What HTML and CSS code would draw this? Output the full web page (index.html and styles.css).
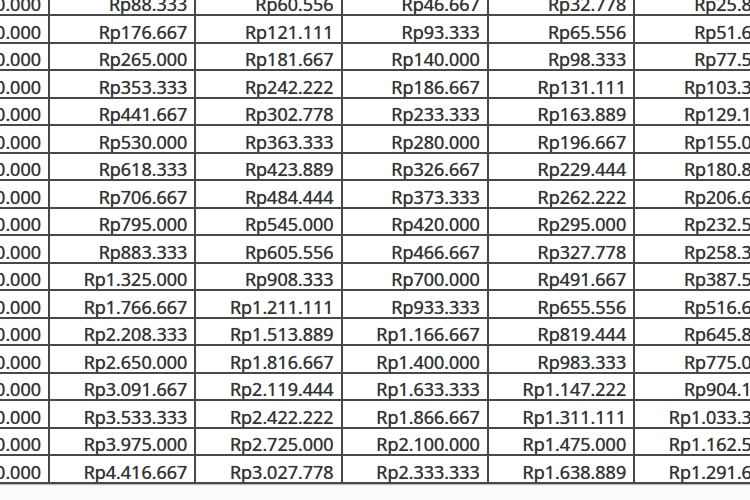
FILE: index.html
```html
<!DOCTYPE html>
<html lang="id">
<head>
<meta charset="utf-8">
<link rel="stylesheet" href="styles.css">
<title>Tabel Angsuran</title>
</head>
<body>
<div class="sheet">
  <div class="c">Rp1.000.000</div><div class="c">Rp88.333</div><div class="c">Rp60.556</div><div class="c">Rp46.667</div><div class="c">Rp32.778</div><div class="c">Rp25.833</div>
  <div class="c">Rp2.000.000</div><div class="c">Rp176.667</div><div class="c">Rp121.111</div><div class="c">Rp93.333</div><div class="c">Rp65.556</div><div class="c">Rp51.667</div>
  <div class="c">Rp3.000.000</div><div class="c">Rp265.000</div><div class="c">Rp181.667</div><div class="c">Rp140.000</div><div class="c">Rp98.333</div><div class="c">Rp77.500</div>
  <div class="c">Rp4.000.000</div><div class="c">Rp353.333</div><div class="c">Rp242.222</div><div class="c">Rp186.667</div><div class="c">Rp131.111</div><div class="c">Rp103.333</div>
  <div class="c">Rp5.000.000</div><div class="c">Rp441.667</div><div class="c">Rp302.778</div><div class="c">Rp233.333</div><div class="c">Rp163.889</div><div class="c">Rp129.167</div>
  <div class="c">Rp6.000.000</div><div class="c">Rp530.000</div><div class="c">Rp363.333</div><div class="c">Rp280.000</div><div class="c">Rp196.667</div><div class="c">Rp155.000</div>
  <div class="c">Rp7.000.000</div><div class="c">Rp618.333</div><div class="c">Rp423.889</div><div class="c">Rp326.667</div><div class="c">Rp229.444</div><div class="c">Rp180.833</div>
  <div class="c">Rp8.000.000</div><div class="c">Rp706.667</div><div class="c">Rp484.444</div><div class="c">Rp373.333</div><div class="c">Rp262.222</div><div class="c">Rp206.667</div>
  <div class="c">Rp9.000.000</div><div class="c">Rp795.000</div><div class="c">Rp545.000</div><div class="c">Rp420.000</div><div class="c">Rp295.000</div><div class="c">Rp232.500</div>
  <div class="c">Rp10.000.000</div><div class="c">Rp883.333</div><div class="c">Rp605.556</div><div class="c">Rp466.667</div><div class="c">Rp327.778</div><div class="c">Rp258.333</div>
  <div class="c">Rp15.000.000</div><div class="c">Rp1.325.000</div><div class="c">Rp908.333</div><div class="c">Rp700.000</div><div class="c">Rp491.667</div><div class="c">Rp387.500</div>
  <div class="c">Rp20.000.000</div><div class="c">Rp1.766.667</div><div class="c">Rp1.211.111</div><div class="c">Rp933.333</div><div class="c">Rp655.556</div><div class="c">Rp516.667</div>
  <div class="c">Rp25.000.000</div><div class="c">Rp2.208.333</div><div class="c">Rp1.513.889</div><div class="c">Rp1.166.667</div><div class="c">Rp819.444</div><div class="c">Rp645.833</div>
  <div class="c">Rp30.000.000</div><div class="c">Rp2.650.000</div><div class="c">Rp1.816.667</div><div class="c">Rp1.400.000</div><div class="c">Rp983.333</div><div class="c">Rp775.000</div>
  <div class="c">Rp35.000.000</div><div class="c">Rp3.091.667</div><div class="c">Rp2.119.444</div><div class="c">Rp1.633.333</div><div class="c">Rp1.147.222</div><div class="c">Rp904.167</div>
  <div class="c">Rp40.000.000</div><div class="c">Rp3.533.333</div><div class="c">Rp2.422.222</div><div class="c">Rp1.866.667</div><div class="c">Rp1.311.111</div><div class="c">Rp1.033.333</div>
  <div class="c">Rp45.000.000</div><div class="c">Rp3.975.000</div><div class="c">Rp2.725.000</div><div class="c">Rp2.100.000</div><div class="c">Rp1.475.000</div><div class="c">Rp1.162.500</div>
  <div class="c">Rp50.000.000</div><div class="c">Rp4.416.667</div><div class="c">Rp3.027.778</div><div class="c">Rp2.333.333</div><div class="c">Rp1.638.889</div><div class="c">Rp1.291.667</div>
</div>
</body>
</html>
```

FILE: styles.css
```css
html, body {
  margin: 0;
  padding: 0;
  background: #fbfbfb;
  overflow: hidden;
  width: 750px;
  height: 500px;
}

.sheet {
  display: grid;
  grid-template-columns: repeat(6, 144.3px);
  grid-auto-rows: 25.5px;
  gap: 2px;
  background: #484848;
  border-bottom: 2px solid #484848;
  box-shadow: 0 1px 1px rgba(0, 0, 0, 0.25);
  margin: -11.5px 0 0 -96.3px;
  width: max-content;
}

.c {
  background: #ffffff;
  display: flex;
  align-items: flex-end;
  justify-content: flex-end;
  padding: 0 7px 1px 0;
  font-family: "Open Sans", "Liberation Sans", sans-serif;
  font-size: 18px;
  line-height: 18px;
  color: #333333;
  text-shadow: 0 0 0.7px #333333;
  white-space: nowrap;
  overflow: hidden;
}
```
